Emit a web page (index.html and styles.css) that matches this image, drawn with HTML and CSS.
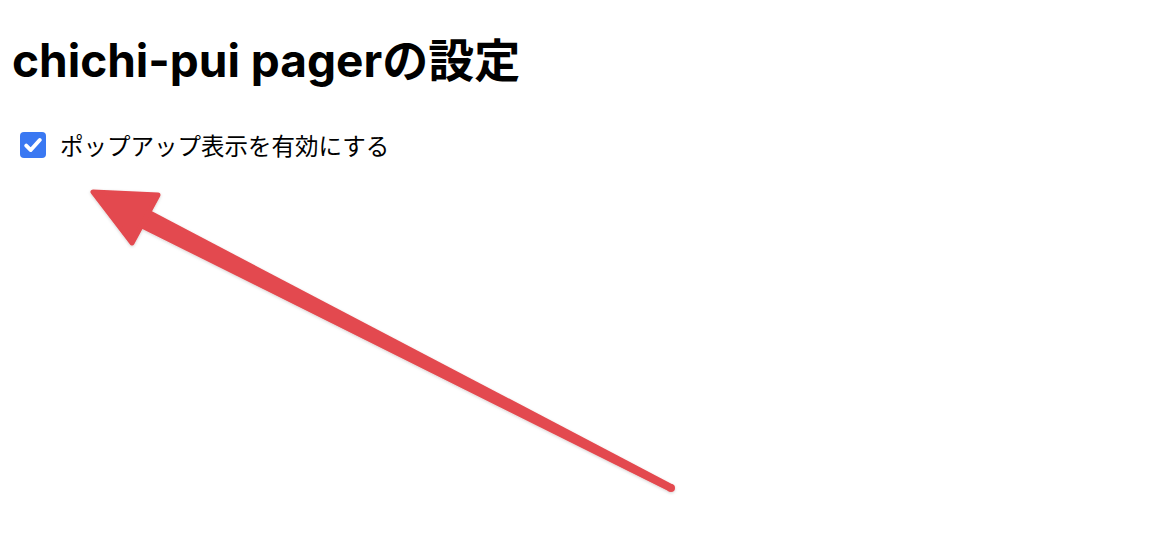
FILE: index.html
```html
<!DOCTYPE html>
<html lang="ja">
<head>
<meta charset="utf-8">
<title>chichi-pui pagerの設定</title>
<link rel="stylesheet" href="styles.css">
</head>
<body>
<main class="settings">
  <h1 class="title">chichi-pui pagerの設定</h1>
  <label class="option">
    <input type="checkbox" class="option-input" checked>
    <span class="box" aria-hidden="true">
      <svg width="18" height="16" viewBox="0 0 16 14"><path d="M2 7.5 L6 11.5 L14 2.5" fill="none" stroke="#fff" stroke-width="3.4" stroke-linecap="round" stroke-linejoin="round"/></svg>
    </span>
    <span class="option-text">ポップアップ表示を有効にする</span>
  </label>
</main>
<svg class="annotation" width="1162" height="542" viewBox="0 0 1162 542" aria-hidden="true">
  <defs>
    <filter id="sh" x="-10%" y="-10%" width="120%" height="120%">
      <feDropShadow dx="0" dy="1" stdDeviation="1.5" flood-color="#000" flood-opacity="0.18"/>
    </filter>
  </defs>
  <g filter="url(#sh)" fill="#e34a4f">
    <polygon points="150.6,210.6 141.4,228.4 669.2,491.6 672.8,484.4"/>
    <circle cx="671" cy="488" r="4"/>
    <polygon points="93,192 158,195 132,243" stroke="#e34a4f" stroke-width="5" stroke-linejoin="round"/>
  </g>
</svg>
</body>
</html>
```
FILE: styles.css
```css
html, body {
  margin: 0;
  padding: 0;
  background: #fff;
}
body {
  font-family: Inter, "Noto Sans CJK JP", sans-serif;
  color: #000;
  padding: 8px 12px;
}
.settings {
  display: flex;
  flex-direction: column;
  align-items: flex-start;
}
.title {
  font-size: 46px;
  font-weight: 700;
  line-height: 56px;
  margin: 24px 0 0 0;
}
.option {
  display: flex;
  align-items: center;
  gap: 14px;
  margin: 41px 0 0 8px;
  cursor: pointer;
}
.option-input {
  position: absolute;
  opacity: 0;
  width: 0;
  height: 0;
  margin: 0;
}
.box {
  width: 26px;
  height: 26px;
  border-radius: 4px;
  background: #3a78f2;
  display: flex;
  align-items: center;
  justify-content: center;
}
.option-text {
  font-family: "Noto Sans CJK JP", sans-serif;
  font-size: 23.5px;
  line-height: 32px;
}
.annotation {
  position: absolute;
  left: 0;
  top: 0;
  pointer-events: none;
}
```
